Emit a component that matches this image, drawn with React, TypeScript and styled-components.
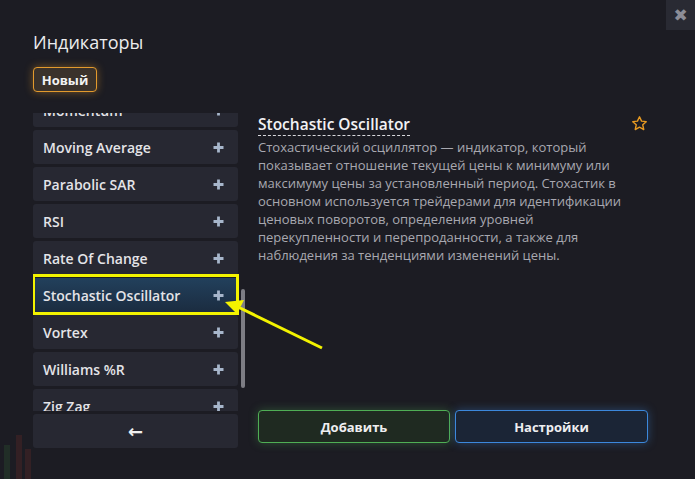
import React from "react";
import styled, { createGlobalStyle } from "styled-components";

const Global = createGlobalStyle`
  html, body { margin: 0; padding: 0; background: #1c1c23; }
  body { font-family: "Open Sans", "Liberation Sans", sans-serif; }
  * { box-sizing: border-box; }
`;

const Modal = styled.div`
  position: relative;
  width: 695px;
  height: 479px;
  overflow: hidden;
  background: #1c1c23;
  padding: 29px 47px 0 33px;
  display: flex;
  flex-direction: column;
`;

const Close = styled.button`
  position: absolute;
  top: 0;
  right: 0;
  width: 29px;
  height: 30px;
  border: none;
  background: #292a33;
  color: #8c8d97;
  font-size: 17px;
  font-weight: 700;
  line-height: 30px;
  padding: 0;
  font-family: "DejaVu Sans", sans-serif;
`;

const Title = styled.h1`
  margin: 0;
  font-size: 18px;
  line-height: 26px;
  font-weight: 400;
  color: #ececee;
`;

const NewTag = styled.button`
  margin-top: 12px;
  width: 64px;
  height: 25px;
  border: 1px solid #e39a2d;
  border-radius: 4px;
  background: #3a322b;
  color: #f2f2f2;
  font-family: "Open Sans", sans-serif;
  font-size: 13px;
  font-weight: 700;
  padding: 0;
  box-shadow: 0 0 8px rgba(227, 154, 45, 0.45);
`;

const Body = styled.div`
  margin-top: 21px;
  display: flex;
  gap: 13px;
  height: 335px;
`;

const LeftCol = styled.div`
  width: 212px;
  display: flex;
  flex-direction: column;
  gap: 3px;
`;

const Viewport = styled.div`
  position: relative;
  height: 298px;
  overflow: hidden;
`;

const List = styled.div`
  margin-top: -20px;
  width: 205px;
  display: flex;
  flex-direction: column;
  gap: 3px;
`;

const Item = styled.div<{ $active?: boolean }>`
  position: relative;
  height: 34px;
  display: flex;
  align-items: center;
  justify-content: space-between;
  padding: 0 14px 0 10px;
  border-radius: 3px;
  background: ${(p) =>
    p.$active ? "linear-gradient(#22405c, #1b2c40)" : "#272832"};
  color: #e4e4e8;
  font-size: 14px;
  font-weight: 600;
`;

const PlusIcon = styled.svg`
  flex: none;
`;

const Highlight = styled.div`
  position: absolute;
  left: -1px;
  right: -1px;
  top: -4px;
  bottom: -3px;
  border: 3px solid #f3f300;
  pointer-events: none;
`;

const ScrollThumb = styled.div`
  position: absolute;
  left: 208px;
  top: 176px;
  width: 4px;
  height: 99px;
  border-radius: 2px;
  background: #7d7d84;
`;

const BackButton = styled.button`
  width: 205px;
  height: 34px;
  border: none;
  border-radius: 3px;
  background: #272832;
  color: #f0f0f0;
  font-size: 18px;
  font-weight: 700;
  padding: 0;
  font-family: "DejaVu Sans", sans-serif;
`;

const RightCol = styled.div`
  width: 390px;
  display: flex;
  flex-direction: column;
`;

const HeadRow = styled.div`
  display: flex;
  justify-content: space-between;
  align-items: flex-start;
`;

const Name = styled.h2`
  margin: 0;
  font-size: 15.5px;
  line-height: 22px;
  font-weight: 600;
  color: #f2f2f4;
  border-bottom: 1px dashed #d8d8dc;
`;

const Star = styled.svg`
  margin-top: 2px;
  flex: none;
`;

const Desc = styled.p`
  margin: 2px 0 0;
  font-size: 13px;
  line-height: 18px;
  color: #a8a8b0;
`;

const Actions = styled.div`
  margin-top: auto;
  margin-bottom: 5px;
  display: grid;
  grid-template-columns: 192px 193px;
  gap: 5px;
`;

const ActionButton = styled.button<{ $tone: "green" | "blue" }>`
  height: 33px;
  border-radius: 4px;
  border: 1px solid ${(p) => (p.$tone === "green" ? "#4fae55" : "#3c88dc")};
  background: ${(p) => (p.$tone === "green" ? "#1f2a21" : "#1b2536")};
  box-shadow: 0 0 10px
    ${(p) =>
      p.$tone === "green" ? "rgba(79,174,85,0.35)" : "rgba(60,136,220,0.4)"};
  color: #eeeef0;
  font-family: "Open Sans", sans-serif;
  font-size: 13px;
  font-weight: 700;
  padding: 0;
`;

const Arrow = styled.svg`
  position: absolute;
  left: 0;
  top: 0;
  pointer-events: none;
`;

const Candle = styled.div<{ $c: string }>`
  position: absolute;
  bottom: 0;
  width: 6px;
  background: ${(p) => p.$c};
  opacity: 0.3;
`;

const items = [
  "Momentum",
  "Moving Average",
  "Parabolic SAR",
  "RSI",
  "Rate Of Change",
  "Stochastic Oscillator",
  "Vortex",
  "Williams %R",
  "Zig Zag",
];

function Plus() {
  return (
    <PlusIcon width="11" height="11" viewBox="0 0 11 11">
      <path d="M5.5 0.5v10M0.5 5.5h10" stroke="#a7b6cb" strokeWidth="2.8" />
    </PlusIcon>
  );
}

export default function App() {
  return (
    <>
      <Global />
      <Modal>
        <Candle $c="#2f5a33" style={{ left: 4, height: 34 }} />
        <Candle $c="#6a2a28" style={{ left: 16, height: 44 }} />
        <Candle $c="#6a2a28" style={{ left: 25, height: 30 }} />
        <Close>✖</Close>
        <Title>Индикаторы</Title>
        <div>
          <NewTag>Новый</NewTag>
        </div>
        <Body>
          <LeftCol>
            <Viewport>
              <List>
                {items.map((name) => {
                  const active = name === "Stochastic Oscillator";
                  return (
                    <Item key={name} $active={active}>
                      <span>{name}</span>
                      <Plus />
                      {active && <Highlight />}
                    </Item>
                  );
                })}
              </List>
              <ScrollThumb />
            </Viewport>
            <BackButton>←</BackButton>
          </LeftCol>
          <RightCol>
            <HeadRow>
              <Name>Stochastic Oscillator</Name>
              <Star width="17" height="17" viewBox="0 0 24 24">
                <path
                  d="M12 2.5l2.9 6.2 6.6.7-4.9 4.5 1.4 6.6L12 17.2l-6 3.3 1.4-6.6-4.9-4.5 6.6-.7z"
                  fill="none"
                  stroke="#e79a22"
                  strokeWidth="2"
                  strokeLinejoin="round"
                />
              </Star>
            </HeadRow>
            <Desc>
              Стохастический осциллятор — индикатор, который показывает
              отношение текущей цены к минимуму или максимуму цены за
              установленный период. Стохастик в основном используется
              трейдерами для идентификации ценовых поворотов, определения
              уровней перекупленности и перепроданности, а также для
              наблюдения за тенденциями изменений цены.
            </Desc>
            <Actions>
              <ActionButton $tone="green">Добавить</ActionButton>
              <ActionButton $tone="blue">Настройки</ActionButton>
            </Actions>
          </RightCol>
        </Body>
        <Arrow width="695" height="479">
          <line
            x1="322"
            y1="348"
            x2="238"
            y2="307"
            stroke="#f3f300"
            strokeWidth="3"
          />
          <polygon points="225,302 244,300 237,314" fill="#f3f300" />
        </Arrow>
      </Modal>
    </>
  );
}
